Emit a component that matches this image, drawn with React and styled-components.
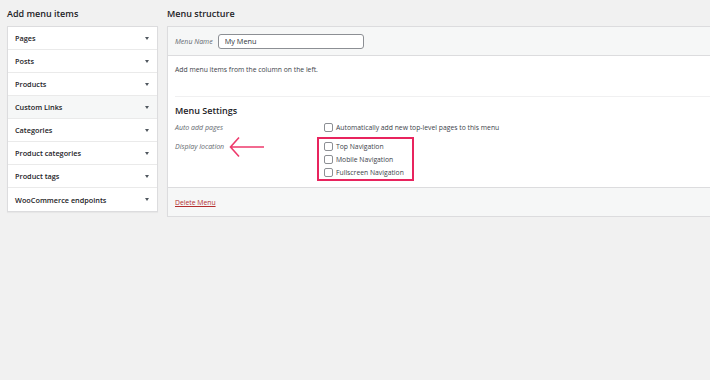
import styled, { createGlobalStyle } from 'styled-components';

const GlobalStyle = createGlobalStyle`
    html, body {
        margin: 0;
        background: #f1f1f1;
        font-family: "Open Sans", "Noto Sans", sans-serif;
        color: #3c434a;
        overflow: hidden;
    }
    * { box-sizing: border-box; }
`

const leftItems = ['Pages', 'Posts', 'Products', 'Custom Links', 'Categories', 'Product categories', 'Product tags', 'WooCommerce endpoints']
const locations = ['Top Navigation', 'Mobile Navigation', 'Fullscreen Navigation']

export default function App() {
    return (
        <>
            <GlobalStyle />
            <Page>
                <LeftColumn>
                    <Heading>Add menu items</Heading>
                    <Accordion>
                        {leftItems.map((item) => (
                            <AccordionRow key={item} $active={item === 'Custom Links'}>
                                <span>{item}</span>
                                <Caret />
                            </AccordionRow>
                        ))}
                    </Accordion>
                </LeftColumn>
                <RightColumn>
                    <Heading>Menu structure</Heading>
                    <MenuPanel>
                        <MenuHeader>
                            <FieldLabel>Menu Name</FieldLabel>
                            <NameInput defaultValue="My Menu" />
                        </MenuHeader>
                        <MenuBody>
                            <Hint>Add menu items from the column on the left.</Hint>
                            <Settings>
                                <SettingsTitle>Menu Settings</SettingsTitle>
                                <SettingRow>
                                    <LabelCell>
                                        <FieldLabel>Auto add pages</FieldLabel>
                                    </LabelCell>
                                    <Option>
                                        <Box />
                                        <span>Automatically add new top-level pages to this menu</span>
                                    </Option>
                                </SettingRow>
                                <SettingRow $top>
                                    <LabelCell $offset>
                                        <FieldLabel>Display location</FieldLabel>
                                        <Arrow width="36" height="22" viewBox="0 0 36 22">
                                            <path d="M35 11 H2 M10 1.5 L1.5 11 L10 20.5" fill="none" stroke="#ee3a6c" strokeWidth="1.6" />
                                        </Arrow>
                                    </LabelCell>
                                    <Highlight>
                                        {locations.map((loc) => (
                                            <Option key={loc}>
                                                <Box />
                                                <span>{loc}</span>
                                            </Option>
                                        ))}
                                    </Highlight>
                                </SettingRow>
                            </Settings>
                        </MenuBody>
                        <MenuFooter>
                            <DeleteLink href="#">Delete Menu</DeleteLink>
                        </MenuFooter>
                    </MenuPanel>
                </RightColumn>
            </Page>
        </>
    )
}

const Page = styled.div`
    display: flex;
    gap: 9px;
    padding-left: 7px;
    width: 720px;
`
const LeftColumn = styled.div`
    width: 151px;
    flex-shrink: 0;
`
const RightColumn = styled.div`
    flex: 1;
`
const Heading = styled.h2`
    margin: 0;
    height: 26px;
    display: flex;
    align-items: center;
    font-size: 9px;
    font-weight: 600;
    color: #1d2327;
`
const Accordion = styled.div`
    background: #fff;
    border: 1px solid #dcdcde;
    box-shadow: 0 1px 1px rgba(0, 0, 0, 0.04);
`
const AccordionRow = styled.div`
    height: 23px;
    display: flex;
    align-items: center;
    justify-content: space-between;
    padding: 0 8px 0 7px;
    font-size: 7.3px;
    font-weight: 600;
    color: #1d2327;
    background: ${(p) => (p.$active ? '#f6f7f7' : '#fff')};
    border-bottom: 1px solid #eaeaea;
    &:last-child { border-bottom: 0; }
`
const Caret = styled.span`
    width: 0;
    height: 0;
    border-left: 2.5px solid transparent;
    border-right: 2.5px solid transparent;
    border-top: 3px solid #50575e;
`
const MenuPanel = styled.div`
    border: 1px solid #dcdcde;
    border-right: 0;
    background: #fff;
    box-shadow: 0 1px 1px rgba(0, 0, 0, 0.04);
`
const MenuHeader = styled.div`
    height: 29px;
    display: flex;
    align-items: center;
    gap: 5px;
    padding-left: 7px;
    background: #f6f7f7;
    border-bottom: 1px solid #dcdcde;
`
const FieldLabel = styled.span`
    font-size: 7px;
    font-style: italic;
    color: #646970;
    white-space: nowrap;
`
const NameInput = styled.input`
    width: 146px;
    height: 15px;
    border: 1px solid #8c8f94;
    border-radius: 3px;
    padding: 0 6px;
    font-family: inherit;
    font-size: 7.3px;
    color: #2c3338;
    background: #fff;
    outline: none;
`
const MenuBody = styled.div`
    padding-left: 7px;
`
const Hint = styled.p`
    margin: 0;
    height: 41px;
    padding-top: 9px;
    font-size: 6.8px;
    line-height: 10px;
    border-bottom: 1px solid #f0f0f1;
`
const Settings = styled.div`
    height: 90px;
    padding-top: 8px;
`
const SettingsTitle = styled.h3`
    margin: 0 0 4px;
    height: 12px;
    line-height: 12px;
    font-size: 9px;
    font-weight: 600;
    color: #1d2327;
`
const SettingRow = styled.div`
    display: flex;
    align-items: ${(p) => (p.$top ? 'flex-start' : 'center')};
    margin-bottom: ${(p) => (p.$top ? '0' : '3px')};
`
const LabelCell = styled.div`
    width: 149px;
    flex-shrink: 0;
    height: 13px;
    display: flex;
    align-items: center;
    gap: 5px;
    margin-top: ${(p) => (p.$offset ? '3px' : '0')};
`
const Arrow = styled.svg`
    display: block;
    flex-shrink: 0;
`
const Option = styled.label`
    display: flex;
    align-items: center;
    gap: 3px;
    height: 13px;
    font-size: 6.8px;
    color: #3c434a;
    span { white-space: nowrap; }
`
const Box = styled.span`
    width: 9px;
    height: 9px;
    border: 1px solid #8c8f94;
    border-radius: 2px;
    background: #fff;
    flex-shrink: 0;
`
const Highlight = styled.div`
    border: 2px solid #e8245e;
    padding: 1px 8px 0 5px;
    margin-left: -7px;
`
const MenuFooter = styled.div`
    height: 29px;
    display: flex;
    align-items: center;
    padding-left: 7px;
    background: #f6f7f7;
    border-top: 1px solid #dcdcde;
`
const DeleteLink = styled.a`
    font-size: 6.8px;
    color: #b32d2e;
    text-decoration: underline;
`
